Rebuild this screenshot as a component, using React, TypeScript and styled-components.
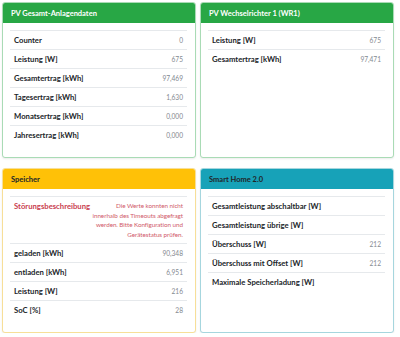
import React from "react";
import styled, { createGlobalStyle } from "styled-components";

const Global = createGlobalStyle`
  html, body { margin: 0; padding: 0; background: #ffffff; }
  body { font-family: Lato, "Open Sans", "Liberation Sans", sans-serif; color: #212529; }
`;

const Page = styled.div`
  display: grid;
  grid-template-columns: 194px 194px;
  column-gap: 4px;
  row-gap: 10px;
  padding: 2px 6px 0 2px;
  align-items: stretch;
`;

type Variant = "success" | "warning" | "info";

const headerBg: Record<Variant, string> = {
  success: "#28a745",
  warning: "#ffc107",
  info: "#17a2b8",
};
const borderCol: Record<Variant, string> = {
  success: "#a9dbb5",
  warning: "#f7df98",
  info: "#a6d6de",
};
const headerFg: Record<Variant, string> = {
  success: "#ffffff",
  warning: "#212529",
  info: "#212529",
};

const Card = styled.section<{ $v: Variant }>`
  display: flex;
  flex-direction: column;
  border: 1px solid ${(p) => borderCol[p.$v]};
  border-radius: 3px;
  background: #fff;
  box-shadow: 0 1px 2px rgba(0, 0, 0, 0.08);
  overflow: hidden;
`;

const Header = styled.div<{ $v: Variant }>`
  height: 20px;
  display: flex;
  align-items: center;
  padding: 0 8px;
  background: ${(p) => headerBg[p.$v]};
  color: ${(p) => headerFg[p.$v]};
  font-size: 7.5px;
  font-weight: 700;
`;

const Body = styled.div`
  padding: 7px 8px 13px 7px;
`;

const Table = styled.div`
  display: flex;
  flex-direction: column;
`;

const Row = styled.div`
  display: flex;
  justify-content: space-between;
  align-items: flex-start;
  gap: 2px;
  border-top: 1px solid #e6e9ec;
  padding: 4px 4px;
  line-height: 10px;
`;

const Label = styled.span<{ $error?: boolean }>`
  flex-shrink: 0;
  font-size: 7.7px;
  font-weight: 700;
  color: ${(p) => (p.$error ? "#c9404f" : "#212529")};
`;

const Value = styled.span<{ $error?: boolean }>`
  color: ${(p) => (p.$error ? "#d0596a" : "#83898f")};
  text-align: right;
  white-space: ${(p) => (p.$error ? "pre-line" : "normal")};
  letter-spacing: ${(p) => (p.$error ? "-0.05px" : "0")};
  font-size: ${(p) => (p.$error ? "6.3px" : "6.6px")};
  line-height: ${(p) => (p.$error ? "9.5px" : "10px")};
`;

type Item = { label: string; value?: string; error?: boolean };

const Panel = ({ title, v, items }: { title: string; v: Variant; items: Item[] }) => (
  <Card $v={v}>
    <Header $v={v}>{title}</Header>
    <Body>
      <Table>
        {items.map((it) => (
          <Row key={it.label}>
            <Label $error={it.error}>{it.label}</Label>
            <Value $error={it.error}>{it.value ?? ""}</Value>
          </Row>
        ))}
      </Table>
    </Body>
  </Card>
);

export default function App() {
  return (
    <>
      <Global />
      <Page>
        <Panel
          title="PV Gesamt-Anlagendaten"
          v="success"
          items={[
            { label: "Counter", value: "0" },
            { label: "Leistung [W]", value: "675" },
            { label: "Gesamtertrag [kWh]", value: "97,469" },
            { label: "Tagesertrag [kWh]", value: "1,630" },
            { label: "Monatsertrag [kWh]", value: "0,000" },
            { label: "Jahresertrag [kWh]", value: "0,000" },
          ]}
        />
        <Panel
          title="PV Wechselrichter 1 (WR1)"
          v="success"
          items={[
            { label: "Leistung [W]", value: "675" },
            { label: "Gesamtertrag [kWh]", value: "97,471" },
          ]}
        />
        <Panel
          title="Speicher"
          v="warning"
          items={[
            {
              label: "Störungsbeschreibung",
              value:
                "Die Werte konnten nicht\ninnerhalb des Timeouts abgefragt\nwerden. Bitte Konfiguration und\nGerätestatus prüfen.",
              error: true,
            },
            { label: "geladen [kWh]", value: "90,348" },
            { label: "entladen [kWh]", value: "6,951" },
            { label: "Leistung [W]", value: "216" },
            { label: "SoC [%]", value: "28" },
          ]}
        />
        <Panel
          title="Smart Home 2.0"
          v="info"
          items={[
            { label: "Gesamtleistung abschaltbar [W]" },
            { label: "Gesamtleistung übrige [W]" },
            { label: "Überschuss [W]", value: "212" },
            { label: "Überschuss mit Offset [W]", value: "212" },
            { label: "Maximale Speicherladung [W]" },
          ]}
        />
      </Page>
    </>
  );
}
